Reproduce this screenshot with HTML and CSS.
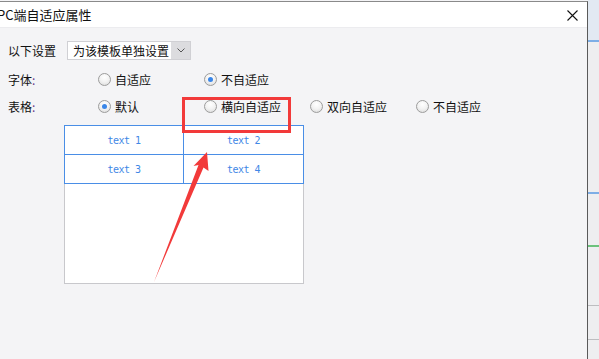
FILE: index.html
```html
<!DOCTYPE html>
<html>
<head>
    <title>PC端自适应属性</title>
    <link rel="stylesheet" href="styles.css">
</head>
<body>
    <div class="screen">
        <div class="dialog">
            <div class="titlebar">
                <span class="title">PC端自适应属性</span>
                <svg class="close" width="11" height="11" viewBox="0 0 11 11">
                    <path d="M0.5 0.5 L10.5 10.5 M10.5 0.5 L0.5 10.5" stroke="#111" stroke-width="1.1" fill="none"/>
                </svg>
            </div>

            <div class="dlg-body">
                <div class="row-select">
                    <span class="label-short">以下设置</span>
                    <div class="select">
                        <span class="select-text">为该模板单独设置</span>
                        <span class="select-arrow">
                            <svg width="8" height="5" viewBox="0 0 8 5">
                                <path d="M0.5 0.5 L4 4 L7.5 0.5" stroke="#555" stroke-width="1" fill="none"/>
                            </svg>
                        </span>
                    </div>
                </div>

                <div class="row">
                    <span class="label">字体<i class="colon">:</i></span>
                    <label class="option"><span class="radio"></span>自适应</label>
                    <label class="option"><span class="radio checked"></span>不自适应</label>
                </div>

                <div class="row">
                    <span class="label">表格<i class="colon">:</i></span>
                    <label class="option"><span class="radio checked"></span>默认</label>
                    <label class="option"><span class="radio"></span>横向自适应</label>
                    <label class="option"><span class="radio"></span>双向自适应</label>
                    <label class="option"><span class="radio"></span>不自适应</label>
                </div>

                <div class="preview">
                    <table class="preview-table">
                        <tr><td class="c1">text 1</td><td>text 2</td></tr>
                        <tr><td class="c1">text 3</td><td>text 4</td></tr>
                    </table>
                </div>
            </div>
        </div>

        <div class="edge">
            <div class="edge-top"></div>
            <div class="edge-line blue"></div>
            <div class="edge-gap g1"></div>
            <div class="edge-line blue"></div>
            <div class="edge-gap g2"></div>
            <div class="edge-line green"></div>
            <div class="edge-gap g3"></div>
            <div class="edge-line gray"></div>
            <div class="edge-gap g4"></div>
            <div class="edge-line gray"></div>
        </div>

        <!-- annotation drawn over the screenshot -->
        <svg class="annot" width="599" height="359" viewBox="0 0 599 359">
            <rect x="183.5" y="98.5" width="106" height="33" fill="none" stroke="#f23a3a" stroke-width="3"/>
            <polygon points="207,152 208.5,171 203.5,167.5 154,282 198.5,165 193.5,166" fill="#f23a3a"/>
        </svg>
    </div>
</body>
</html>
```

FILE: styles.css
```css
body {
    margin: 0;
    padding: 0;
    font-family: "Noto Sans CJK SC", "Noto Sans", sans-serif;
    font-size: 12px;
    color: #111;
    background: #f4f4f6;
}
.screen {
    position: relative;
    display: flex;
    width: 599px;
    height: 359px;
    overflow: hidden;
}
.dialog {
    width: 587px;
    height: 358px;
    margin-top: 1px;
    border-top: 1px solid #8a8a8a;
    border-right: 1px solid #5a5a5a;
    background: #f4f4f6;
    flex-shrink: 0;
}
.titlebar {
    display: flex;
    align-items: center;
    justify-content: space-between;
    height: 25px;
    background: #fff;
    border-bottom: 1px solid #ececef;
}
.title {
    margin-left: -3px;
    font-size: 13px;
    line-height: 25px;
}
.close {
    margin-right: 9px;
    margin-top: 2px;
}
.dlg-body {
    padding: 13px 0 0 8px;
}
.row-select {
    display: flex;
    align-items: center;
    height: 19px;
    margin-bottom: 6px;
}
.label-short {
    width: 59px;
}
.select {
    display: flex;
    align-items: stretch;
    width: 122px;
    height: 17px;
    border: 1px solid #d0d0d4;
    background: #fff;
}
.select-text {
    flex: 1;
    padding-left: 5px;
    line-height: 17px;
}
.select-arrow {
    display: flex;
    align-items: center;
    justify-content: center;
    width: 19px;
    background: #dcdcdf;
}
.row {
    display: flex;
    align-items: center;
    height: 27px;
}
.label {
    width: 90px;
}
.colon {
    font-style: normal;
    color: #6a3a8a;
}
.option {
    display: flex;
    align-items: center;
    width: 106px;
}
.radio {
    box-sizing: border-box;
    width: 13px;
    height: 13px;
    margin-right: 4px;
    border: 1px solid #9c9c9c;
    border-radius: 50%;
    background: radial-gradient(circle at 50% 30%, #ffffff 0%, #f2f2f2 50%, #d8d8d8 100%);
    position: relative;
}
.radio.checked::after {
    content: "";
    position: absolute;
    left: 3px;
    top: 3px;
    width: 5px;
    height: 5px;
    border-radius: 50%;
    background: #3a86e8;
}
.preview {
    width: 238px;
    height: 157px;
    margin: 5px 0 0 56px;
    border: 1px solid #c8c8cc;
    background: #fff;
}
.preview-table {
    border-collapse: collapse;
    width: 240px;
    margin: -1px -1px 0;
    table-layout: fixed;
}
.preview-table td {
    height: 28px;
    padding: 0;
    border: 1px solid #4a8ee6;
    text-align: center;
    font-family: "DejaVu Sans Mono", monospace;
    font-size: 10px;
    letter-spacing: -0.5px;
    color: #3f88e6;
}
.preview-table td.c1 {
    width: 118px;
}
.edge {
    flex: 1;
    display: flex;
    flex-direction: column;
    background: #eeeef0;
}
.edge-top {
    height: 40px;
    background: #e2e9f2;
}
.edge-line {
    height: 2px;
}
.edge-line.blue {
    background: #7eaee6;
}
.edge-line.green {
    background: #6cc27c;
}
.edge-line.gray {
    height: 1px;
    background: #bdbdc0;
}
.edge-gap.g1 {
    height: 150px;
}
.edge-gap.g2 {
    height: 51px;
}
.edge-gap.g3 {
    height: 58px;
}
.edge-gap.g4 {
    height: 33px;
}
.annot {
    position: absolute;
    left: 0;
    top: 0;
    pointer-events: none;
}
```
